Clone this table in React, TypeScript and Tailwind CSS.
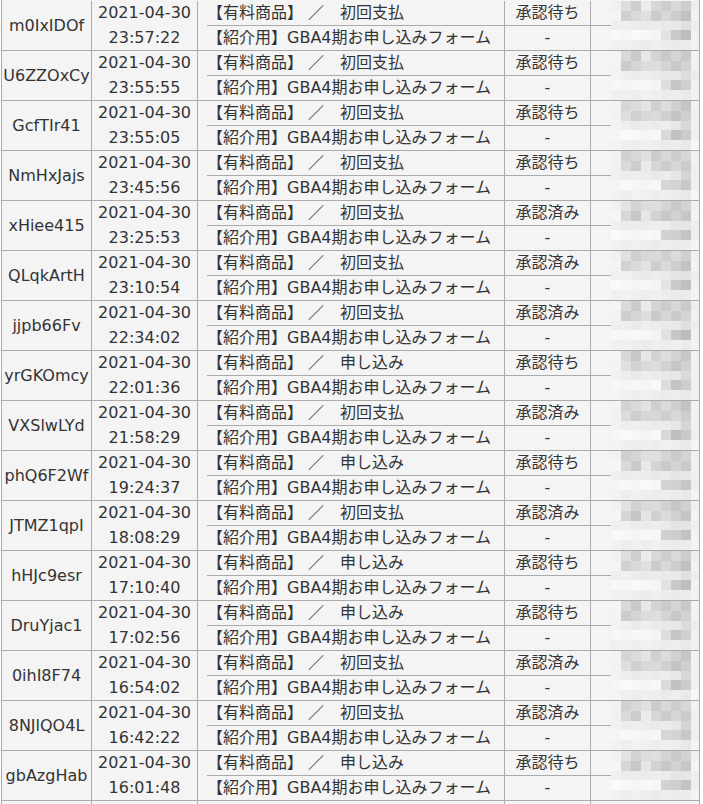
type Row = { id: string; time: string; kind: string; status: string };

const ROWS: Row[] = [
  { id: 'm0IxIDOf', time: '23:57:22', kind: '初回支払', status: '承認待ち' },
  { id: 'U6ZZOxCy', time: '23:55:55', kind: '初回支払', status: '承認待ち' },
  { id: 'GcfTIr41', time: '23:55:05', kind: '初回支払', status: '承認待ち' },
  { id: 'NmHxJajs', time: '23:45:56', kind: '初回支払', status: '承認待ち' },
  { id: 'xHiee415', time: '23:25:53', kind: '初回支払', status: '承認済み' },
  { id: 'QLqkArtH', time: '23:10:54', kind: '初回支払', status: '承認済み' },
  { id: 'jjpb66Fv', time: '22:34:02', kind: '初回支払', status: '承認済み' },
  { id: 'yrGKOmcy', time: '22:01:36', kind: '申し込み', status: '承認待ち' },
  { id: 'VXSlwLYd', time: '21:58:29', kind: '初回支払', status: '承認済み' },
  { id: 'phQ6F2Wf', time: '19:24:37', kind: '申し込み', status: '承認待ち' },
  { id: 'JTMZ1qpI', time: '18:08:29', kind: '初回支払', status: '承認済み' },
  { id: 'hHJc9esr', time: '17:10:40', kind: '申し込み', status: '承認待ち' },
  { id: 'DruYjac1', time: '17:02:56', kind: '申し込み', status: '承認待ち' },
  { id: '0ihI8F74', time: '16:54:02', kind: '初回支払', status: '承認済み' },
  { id: '8NJlQO4L', time: '16:42:22', kind: '初回支払', status: '承認済み' },
  { id: 'gbAzgHab', time: '16:01:48', kind: '申し込み', status: '承認待ち' },
];

// base greys of the blurred (censored) column, one list per 10px band
const MOSAIC: number[][] = [
  [242, 217, 210, 226, 214, 212, 209, 205, 240],
  [243, 214, 208, 224, 212, 210, 206, 203, 241],
  [240, 238, 236, 236, 235, 234, 230, 222, 238],
  [247, 247, 246, 246, 246, 218, 200, 198, 240],
  [241, 239, 239, 238, 238, 237, 236, 234, 243],
];

function grey(v: number, tint = 0) {
  const c = Math.max(0, Math.min(255, v));
  return `rgb(${c + tint},${c},${Math.min(255, c + 3)})`;
}

function Mosaic({ seed }: { seed: number }) {
  return (
    <div className="absolute left-[20px] top-0 flex h-full w-[88px] flex-col">
      {MOSAIC.map((band, r) => (
        <div key={r} className="flex h-[10px]">
          {band.map((v, c) => {
            const n = ((seed * 31 + r * 17 + c * 7) % 11) - 5;
            return (
              <div
                key={c}
                className={c === 8 ? 'h-full w-[8px]' : 'h-full w-[10px]'}
                style={{ backgroundColor: grey(v + (v < 230 ? n * 2 : n / 2), r === 3 && c === 6 ? 2 : 0) }}
              />
            );
          })}
        </div>
      ))}
    </div>
  );
}

function Group({ row, index }: { row?: Row; index: number }) {
  return (
    <div className="flex h-[50px] border-b border-[#ababab]">
      <div className="flex w-[90px] items-center justify-center border-r border-[#ababab]">
        {row?.id}
      </div>
      <div className="flex w-[106px] flex-col border-r border-[#ababab] text-center leading-[24px]">
        <div className="h-[25px]">{row && '2021-04-30'}</div>
        <div className="h-[24px]">{row?.time}</div>
      </div>
      <div className="flex w-[393px] flex-col border-r border-[#ababab] pl-[9px] leading-[24px]">
        <div className="flex h-[25px] border-b border-[#ababab]">
          <div className="w-[298px] whitespace-pre border-r border-[#ababab]">
            {row && `【有料商品】 ／　${row.kind}`}
          </div>
          <div className="flex-1 text-center">{row?.status}</div>
        </div>
        <div className="flex h-[24px]">
          <div className="w-[298px] border-r border-[#ababab]">{row && '【紹介用】GBA4期お申し込みフォーム'}</div>
          <div className="flex-1 text-center">{row && '-'}</div>
        </div>
      </div>
      <div className="relative flex-1">
        <div className="h-[25px] border-b border-[#ababab]" />
        {row && <Mosaic seed={index} />}
      </div>
    </div>
  );
}

export default function App() {
  return (
    <div className="h-[804px] overflow-hidden bg-white">
      <div
        className="ml-px w-[699px] border-x border-[#ababab] bg-[#f4f4f4] pt-px text-[16px] text-[#333333]"
        style={{ fontFamily: '"DejaVu Sans", "Noto Sans CJK JP", sans-serif' }}
      >
        {ROWS.map((row, i) => (
          <Group key={row.id} row={row} index={i} />
        ))}
        <Group index={16} />
      </div>
    </div>
  );
}
